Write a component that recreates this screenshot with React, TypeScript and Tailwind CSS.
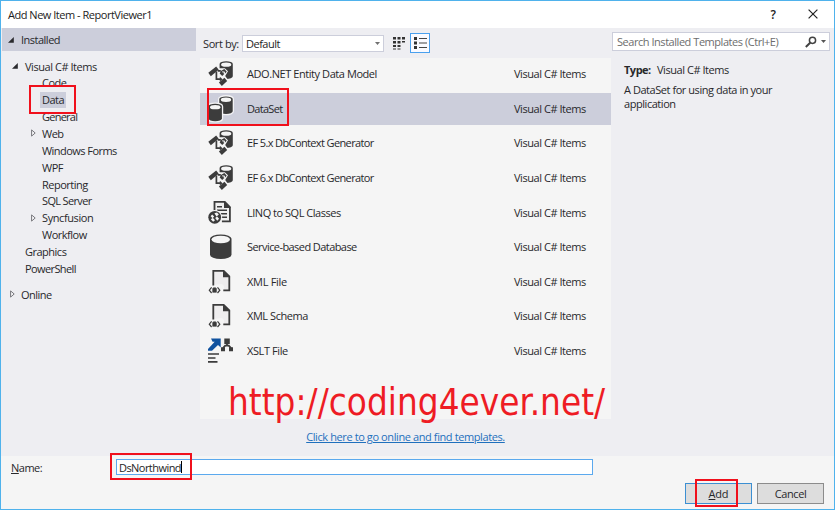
import React from 'react';

const INK = '#3c3c3c';

function Expanded() {
  return (
    <svg width="6" height="6" viewBox="0 0 6 6" className="block shrink-0">
      <path d="M5.8 0V5.8H0Z" fill="#2a2a2e" />
    </svg>
  );
}

function Collapsed() {
  return (
    <svg width="5" height="8" viewBox="0 0 5 8" className="block shrink-0">
      <path d="M0.6 0.9V7.1L4.2 4Z" fill="#f5f5f8" stroke="#77777c" strokeWidth="1" />
    </svg>
  );
}

function Cylinder({ x, y, w, h, halo }: { x: number; y: number; w: number; h: number; halo?: string }) {
  const ry = w * 0.2;
  const body = `M${x} ${y + ry}a${w / 2} ${ry} 0 0 1 ${w} 0V${y + h - ry}a${w / 2} ${ry} 0 0 1 ${-w} 0Z`;
  return (
    <g>
      {halo && <path d={body} fill={halo} stroke={halo} strokeWidth="2.6" />}
      <path d={body} fill={INK} />
      <ellipse cx={x + w / 2} cy={y + ry + 0.7} rx={w / 2 - 1.5} ry={ry - 0.5} fill="#f5f5f5" />
    </g>
  );
}

function EntityIcon() {
  return (
    <>
      <Cylinder x={11.6} y={0.3} w={13.2} h={17.6} />
      <path d="M0.3 11.8 8.2 5.4l2.5 3.4-7.9 6.4Z" fill="#f5f5f5" stroke="#f5f5f5" strokeWidth="2.4" />
      <path d="M11.5 7.2h5.3l3.2 3-2.8 4.8 2.4 3.2-2 1.5h-9.8V9Z" fill="#f5f5f5" />
      <path d="M8.4 10.5v7.7h4.6M9.8 9.8h3" fill="none" stroke={INK} strokeWidth="1.7" />
      <path d="M0.3 11.8 8.2 5.4l2.5 3.4-7.9 6.4Z" fill={INK} />
      <path d="m12.8 9.9 3.6-2 2.4 2.9-4.6 4.2-2.5-2.5Z" fill={INK} />
      <path d="m14.2 10.7 2.2.4-.1 2.1" fill="none" stroke="#f5f5f5" strokeWidth="1.1" />
      <path d="m10.9 21.6 5.5-4.9 2.8 3.2-5.4 5Z" fill={INK} />
      <path d="m11.8 15.8 2.8 2.4-2.8 2.2Z" fill={INK} />
    </>
  );
}

function DataSetIcon() {
  return (
    <>
      <Cylinder x={11.3} y={0.4} w={13.4} h={17.6} halo="#f2f2f4" />
      <Cylinder x={0.5} y={7.8} w={13.4} h={17.4} halo="#f2f2f4" />
    </>
  );
}

function LinqIcon() {
  return (
    <>
      <path d="M6.5 11V1.9h10.3l5.1 5.2v14.2h-8" fill="#f0f0f0" stroke={INK} strokeWidth="1.8" />
      <path d="M16 1v7h7Z" fill={INK} />
      <path d="M9 6.8h5M9 10.3h10M12 13.8h7M14 17.3h5" stroke={INK} strokeWidth="1.5" />
      <circle cx="6.7" cy="17.3" r="7.4" fill="#f5f5f5" />
      <circle cx="6.7" cy="17.3" r="6.4" fill={INK} />
      <path d="M6.4 13.2 9 12.6l1.9 2-2.4 1.9ZM2.6 16.2l1.6-1.8 2 2.2-1.7 1.6ZM7.2 18l1.9-1.4 2 2.2-1.9 2ZM2.8 19.2l2-1.4 2.2 2.4-1.9 1.6Z" fill="#f5f5f5" />
    </>
  );
}

function XmlIcon() {
  return (
    <>
      <path d="M6 16V1.8h9l6 6v13.4h-5V17l-2-2Z" fill="#eeedee" />
      <path d="M5.3 16.5V1.8h10.4l5.6 5.6v14h-6" fill="none" stroke={INK} strokeWidth="1.8" />
      <path d="M15 1v7.3h7.2Z" fill={INK} />
      <path d="M3.6 18.3 1.3 21.2l2.3 2.8M9.5 18.3l2.3 2.9L9.5 24" fill="none" stroke={INK} strokeWidth="1.2" />
      <path d="M4.7 19.5h3.7v3.8H4.7ZM5.4 19.8v-1h2.3v1" fill={INK} stroke={INK} strokeWidth=".6" />
    </>
  );
}

function XsltIcon() {
  return (
    <>
      <path d="M3 0.5h9.7v9.1L10 7 4 12.8H0V11l6.7-7.3H4.6Z" fill="#10529f" />
      <path d="M16.3.6h5.5v5.4h-5.5ZM13 9.3h4V13.2h-4ZM21 9.3h4V13.2h-4Z" fill={INK} />
      <path d="M19 5v3M15 10.2l2.2-2.6h3.6l2.2 2.6" fill="none" stroke={INK} strokeWidth="1.8" />
      <path d="M0 16h11M0 20h7.5M0 23.8h9.5" stroke={INK} strokeWidth="1.7" />
    </>
  );
}

const icons = {
  entity: <EntityIcon />,
  dataset: <DataSetIcon />,
  linq: <LinqIcon />,
  database: <Cylinder x={2} y={0.5} w={21.5} h={24.5} />,
  xml: <XmlIcon />,
  xslt: <XsltIcon />,
};

const templates: { name: string; icon: keyof typeof icons; selected?: boolean; track: string }[] = [
  { name: 'ADO.NET Entity Data Model', icon: 'entity', track: 'tracking-[-0.43px]' },
  { name: 'DataSet', icon: 'dataset', selected: true, track: 'tracking-[-0.7px]' },
  { name: 'EF 5.x DbContext Generator', icon: 'entity', track: 'tracking-[-0.62px]' },
  { name: 'EF 6.x DbContext Generator', icon: 'entity', track: 'tracking-[-0.62px]' },
  { name: 'LINQ to SQL Classes', icon: 'linq', track: 'tracking-[-0.48px]' },
  { name: 'Service-based Database', icon: 'database', track: 'tracking-[-0.57px]' },
  { name: 'XML File', icon: 'xml', track: 'tracking-[-0.3px]' },
  { name: 'XML Schema', icon: 'xml', track: 'tracking-[-0.45px]' },
  { name: 'XSLT File', icon: 'xslt', track: 'tracking-[-0.4px]' },
];

const tree: { name: string; arrow?: boolean; selected?: boolean; track?: string }[] = [
  { name: 'Code' },
  { name: 'Data', selected: true },
  { name: 'General', track: 'tracking-[-0.75px]' },
  { name: 'Web', arrow: true },
  { name: 'Windows Forms', track: 'tracking-[-0.55px]' },
  { name: 'WPF' },
  { name: 'Reporting' },
  { name: 'SQL Server', track: 'tracking-[-0.65px]' },
  { name: 'Syncfusion', arrow: true, track: 'tracking-[-0.4px]' },
  { name: 'Workflow' },
];

function TitleBar() {
  return (
    <header className="flex h-[27px] shrink-0 items-center bg-white pb-px pl-[7px] text-[11px] text-[#1c1c1c]">
      <span className="grow tracking-[-0.48px]">Add New Item - ReportViewer1</span>
      <span className="w-[10px] text-center text-[12px] font-semibold">?</span>
      <svg width="10" height="10" viewBox="0 0 10 10" className="mr-[16px] ml-[30px]">
        <path d="M.6.6l8.8 8.8M9.4.6.6 9.4" stroke="#222" strokeWidth="1.2" />
      </svg>
    </header>
  );
}

function Sidebar() {
  return (
    <nav className="flex w-[194px] shrink-0 flex-col tracking-[-0.5px]">
      <div className="flex h-[23px] items-center bg-[#cccedb] pl-[6px]">
        <Expanded />
        <span className="ml-[7px]">Installed</span>
      </div>
      <div className="mt-[6.6px] flex h-[16.87px] items-center pl-[10px]">
        <Expanded />
        <span className="ml-[7px] tracking-[-0.45px]">Visual C# Items</span>
      </div>
      {tree.map((item) => (
        <div key={item.name} className={'flex h-[16.87px] items-center pl-[29px] ' + (item.track ?? '')}>
          <span className="w-[9px]">{item.arrow && <Collapsed />}</span>
          <span className={item.selected ? 'bg-[#cccedb] px-[2px] leading-[16px]' : 'ml-[2px]'}>{item.name}</span>
        </div>
      ))}
      <div className="flex h-[16.87px] items-center pl-[23px]">Graphics</div>
      <div className="flex h-[16.87px] items-center pl-[23px] tracking-[-0.6px]">PowerShell</div>
      <div className="mt-[9px] flex h-[16.87px] items-center pl-[8px]">
        <Collapsed />
        <span className="ml-[6px]">Online</span>
      </div>
    </nav>
  );
}

function SortBar() {
  return (
    <div className="flex h-[30px] items-center pl-[3px]">
      <span className="w-[39px] whitespace-nowrap tracking-[-0.4px]">Sort by:</span>
      <div className="flex h-[17px] w-[142px] items-center justify-between border border-[#cccedb] bg-white pr-[3px] pl-[3px]">
        <span className="text-[#1e1e1e] tracking-[-0.5px]">Default</span>
        <svg width="5" height="3" viewBox="0 0 5 3">
          <path d="M0 0h5L2.5 3Z" fill="#717171" />
        </svg>
      </div>
      <svg width="13" height="14" viewBox="0 0 13 14" className="ml-[9px]" fill="#333">
        <path d="M0 1h3v2.5H0zM4.5 1h3v2.5h-3zM9 1h3v2.5H9zM0 5h3v2.5H0zM4.5 5h3v2.5h-3zM0 9h3v2H0zM4.5 9h3v2h-3zM0 12.5h3v1H0zM4.5 12.5h3v1h-3zM9 5h3v1.5H9z" />
      </svg>
      <div className="ml-[4px] flex h-[20px] w-[20px] items-center justify-center border border-[#4aa0ee] bg-[#fafaff]">
        <svg width="13" height="12" viewBox="0 0 13 12">
          <path d="M0 0h3v3H0zM0 4.5h3v3H0zM0 9h3v3H0z" fill="#333" />
          <path d="M5 1.5h8M5 6h8M5 10.5h8" stroke="#444" strokeWidth="1" />
        </svg>
      </div>
    </div>
  );
}

function TemplateList() {
  return (
    <div className="flex h-[361px] flex-col bg-[#f5f5f5]">
      {templates.map((t) => (
        <div key={t.name} className="flex h-[34.6px] shrink-0 items-center first:-mt-px">
          <div className={'flex h-[32px] w-full items-center pl-[8px] ' + (t.selected ? 'bg-[#cccedb]' : '')}>
            <svg width="26" height="26" viewBox="0 0 26 26" className="shrink-0 overflow-visible">
              {icons[t.icon]}
            </svg>
            <span className={'ml-[13px] w-[267px] pb-px whitespace-nowrap ' + t.track}>{t.name}</span>
            <span className="pb-px tracking-[-0.45px]">Visual C# Items</span>
          </div>
        </div>
      ))}
    </div>
  );
}

function Details() {
  return (
    <aside className="flex w-[222px] flex-col pt-[4px]">
      <div className="ml-px flex h-[19px] w-[218px] items-center border border-[#cccedb] bg-white pl-[4px]">
        <span className="grow whitespace-nowrap text-[#6d6d6d] tracking-[-0.46px]">Search Installed Templates (Ctrl+E)</span>
        <svg width="12" height="12" viewBox="0 0 12 12">
          <circle cx="7.5" cy="4.3" r="3.1" fill="none" stroke="#424242" strokeWidth="1.5" />
          <path d="M5.2 6.7.8 11" stroke="#424242" strokeWidth="2" />
        </svg>
        <svg width="5" height="3" viewBox="0 0 5 3" className="mr-[3px] ml-[4px]">
          <path d="M0 0h5L2.5 3Z" fill="#555" />
        </svg>
      </div>
      <div className="mt-[11px] ml-[13px] flex items-center leading-[16px]">
        <b className="w-[33px] font-bold tracking-[-0.5px]">Type:</b>
        <span className="tracking-[-0.45px]">Visual C# Items</span>
      </div>
      <p className="mt-[5px] ml-[13px] w-[160px] leading-[13.5px] tracking-[-0.45px]">
        A DataSet for using data in your application
      </p>
    </aside>
  );
}

function Footer() {
  return (
    <footer className="flex grow flex-col bg-[#f5f5f5]">
      <div className="flex h-[22px] items-center pl-[10px]">
        <label className="w-[105px] tracking-[-0.5px]">
          <span className="underline">N</span>ame:
        </label>
        <div className="flex h-[16px] w-[477px] items-center border border-[#5ba9ee] bg-white pl-[2px] text-[#1e1e1e]">
          <span className="tracking-[-0.55px]">DsNorthwind</span>
          <i className="h-[12px] w-px bg-black" />
        </div>
      </div>
      <div className="mt-[5px] flex justify-end gap-[5px] pr-[10px]">
        <button className="h-[21px] w-[67px] border border-[#3c8fd2] bg-[#dddddd] tracking-[-0.2px]">
          <span className="underline">A</span>dd
        </button>
        <button className="h-[21px] w-[67px] border border-[#8c8c8c] bg-[#dddddd] tracking-[-0.4px]">Cancel</button>
      </div>
    </footer>
  );
}

export default function App() {
  return (
    <div className="relative flex h-[510px] w-[835px] flex-col overflow-hidden border border-[#4fb2ec] bg-[#eeeef2] font-['Open_Sans','Noto_Sans',sans-serif] text-[11px] leading-[15px] tracking-[-0.4px] text-[#28282b]">
      <TitleBar />
      <div className="flex h-[428px] shrink-0 pl-px">
        <Sidebar />
        <main className="ml-[4px] flex w-[411px] shrink-0 flex-col">
          <SortBar />
          <TemplateList />
          <a className="mt-[10px] self-center text-[#1f70bd] underline">Click here to go online and find templates.</a>
        </main>
        <Details />
      </div>
      <Footer />

      {/* Tutorial annotations drawn over the dialog */}
      <div className="absolute top-[84px] left-[28px] h-[29px] w-[47px] border-2 border-[#f0101c]" />
      <div className="absolute top-[87px] left-[206px] h-[38px] w-[82px] border-2 border-[#f0101c]" />
      <div className="absolute top-[452px] left-[109px] h-[27px] w-[82px] border-2 border-[#f0101c]" />
      <div className="absolute top-[478px] left-[694px] h-[28px] w-[43px] border-2 border-[#f0101c]" />
      <div className="absolute top-[380px] left-[227px] font-['DejaVu_Sans_Condensed','DejaVu_Sans',sans-serif] text-[36.5px] leading-[44px] tracking-[0.02px] whitespace-nowrap text-[#ee1c24]">
        http://coding4ever.net/
      </div>
    </div>
  );
}
